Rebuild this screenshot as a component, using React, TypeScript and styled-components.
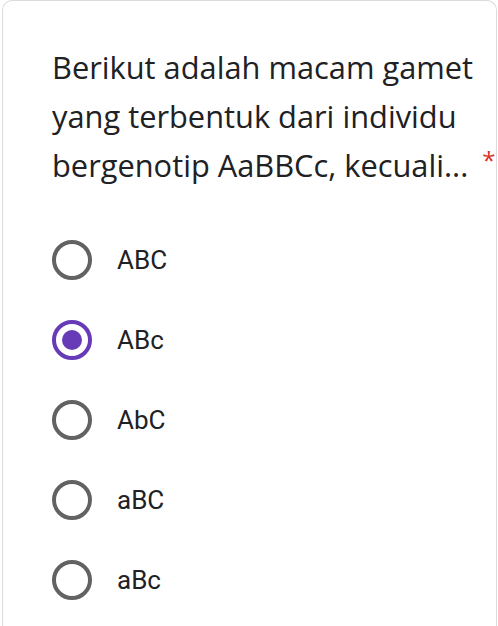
import React, { useState } from 'react';
import styled, { createGlobalStyle } from 'styled-components';

const GlobalStyle = createGlobalStyle`
  html, body {
    margin: 0;
    padding: 0;
    background: #ffffff;
    overflow: hidden;
  }
`;

const options = ['ABC', 'ABc', 'AbC', 'aBC', 'aBc'];

const App = () => {
  const [selected, setSelected] = useState('ABc');

  return (
    <>
      <GlobalStyle />
      <Card>
        <Question>
          Berikut adalah macam gamet yang terbentuk dari individu bergenotip AaBBCc,{' '}
          <NoWrap>
            kecuali...
            <Required>*</Required>
          </NoWrap>
        </Question>
        <OptionList>
          {options.map((opt) => (
            <OptionRow key={opt} onClick={() => setSelected(opt)}>
              <Radio $checked={selected === opt}>
                {selected === opt && <RadioDot />}
              </Radio>
              <OptionLabel>{opt}</OptionLabel>
            </OptionRow>
          ))}
        </OptionList>
      </Card>
    </>
  );
};
export default App;

const Card = styled.section`
  margin: 0 1px 0 2px;
  height: 626px;
  box-sizing: border-box;
  border: 1px solid #dadce0;
  border-bottom: none;
  border-radius: 10px 10px 0 0;
  padding: 42px 0 0 49px;
  background: #ffffff;
  overflow: hidden;
`;

const Question = styled.div`
  font-family: 'Open Sans', 'Noto Sans', sans-serif;
  font-size: 30.8px;
  line-height: 49px;
  color: #202124;
  width: 460px;
`;

const NoWrap = styled.span`
  white-space: nowrap;
`;

const Required = styled.span`
  display: inline-block;
  color: #d93025;
  font-size: 24px;
  line-height: 24px;
  margin-left: 14px;
  vertical-align: 8px;
`;

const OptionList = styled.div`
  margin-top: 30px;
  display: flex;
  flex-direction: column;
`;

const OptionRow = styled.label`
  height: 80px;
  display: flex;
  align-items: center;
  gap: 25px;
  cursor: pointer;
`;

const Radio = styled.span<{ $checked: boolean }>`
  width: 40px;
  height: 40px;
  box-sizing: border-box;
  border-radius: 50%;
  border: 4px solid ${(p) => (p.$checked ? '#673ab7' : '#626262')};
  display: flex;
  align-items: center;
  justify-content: center;
  flex-shrink: 0;
`;

const RadioDot = styled.span`
  width: 20px;
  height: 20px;
  border-radius: 50%;
  background: #673ab7;
`;

const OptionLabel = styled.span`
  font-family: Roboto, 'Liberation Sans', sans-serif;
  font-size: 26px;
  color: #202124;
`;
